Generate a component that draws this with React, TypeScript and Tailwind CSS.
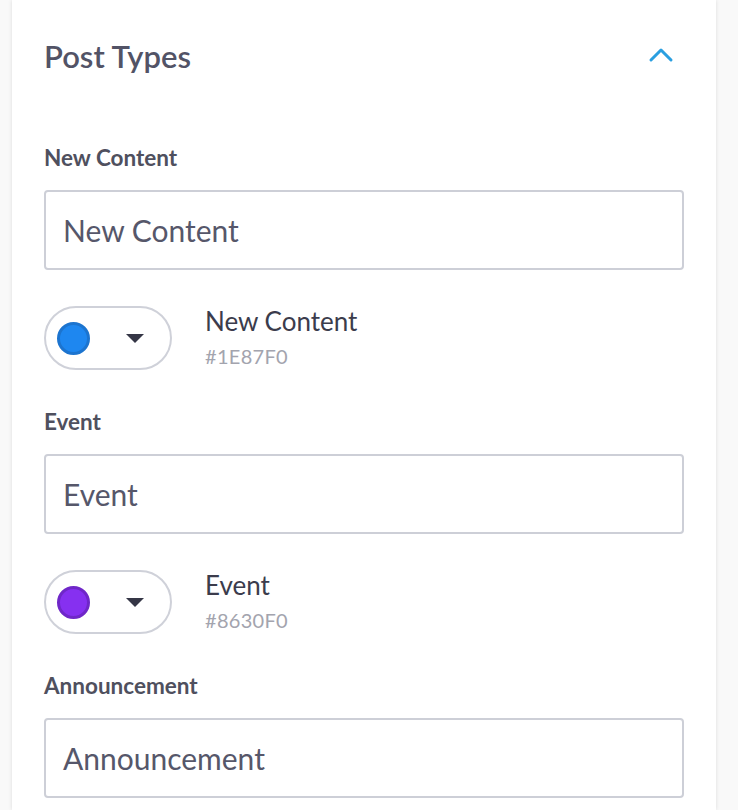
import { ChevronUp } from 'lucide-react';

interface PostType {
  label: string;
  value: string;
  color?: string;
  ring?: string;
}

const postTypes: PostType[] = [
  { label: 'New Content', value: 'New Content', color: '#1E87F0', ring: '#1c74cf' },
  { label: 'Event', value: 'Event', color: '#8630F0', ring: '#6f27c8' },
  { label: 'Announcement', value: 'Announcement' },
];

function ColorRow({ item }: { item: PostType }) {
  return (
    <div className="flex items-center mt-[36px] mb-[40px]">
      <button className="flex items-center h-[64px] w-[128px] rounded-full border-2 border-[#cfd1d9] bg-white pl-[11px] pr-[26px] justify-between">
        <span
          className="block w-[33px] h-[33px] rounded-full border-[3px]"
          style={{ backgroundColor: item.color, borderColor: item.ring }}
        />
        <span className="block w-0 h-0 border-l-[9px] border-r-[9px] border-t-[9px] border-l-transparent border-r-transparent border-t-[#353646]" />
      </button>
      <div className="ml-[33px] flex flex-col -mt-[2px]">
        <span className="text-[26px] leading-[30px] text-[#3b3c4c]">{item.value}</span>
        <span className="text-[20px] leading-[24px] mt-[8px] text-[#a3a4ae] tracking-[0.3px]">{item.color}</span>
      </div>
    </div>
  );
}

export default function App() {
  return (
    <div className="min-h-[810px] bg-[#f9f9f9] pl-[12px] pr-[22px] font-['Lato','Liberation_Sans',sans-serif]">
      <div className="bg-white min-h-[810px] shadow-[0_0_4px_rgba(0,0,0,0.12)] pl-[32px] pr-[32px]">
        <div className="flex items-center justify-between pt-[38px]">
          <h2 className="text-[31px] font-semibold text-[#525366] leading-[36px]">Post Types</h2>
          <ChevronUp className="mr-[3px] w-[40px] h-[40px] -my-[2px] -translate-y-[1px] text-[#2a9fe0]" strokeWidth={1.8} />
        </div>
        <div className="pt-[72px]">
          {postTypes.map((item) => (
            <div key={item.label}>
              <label className="block text-[22.5px] font-bold text-[#4f505e] leading-[24px]">
                {item.label}
              </label>
              <div className="mt-[20px] h-[80px] rounded-[4px] border-2 border-[#cdcfd7] flex items-center px-[17px]">
                <span className="text-[30px] text-[#56576a]">{item.value}</span>
              </div>
              {item.color && <ColorRow item={item} />}
            </div>
          ))}
        </div>
      </div>
    </div>
  );
}
